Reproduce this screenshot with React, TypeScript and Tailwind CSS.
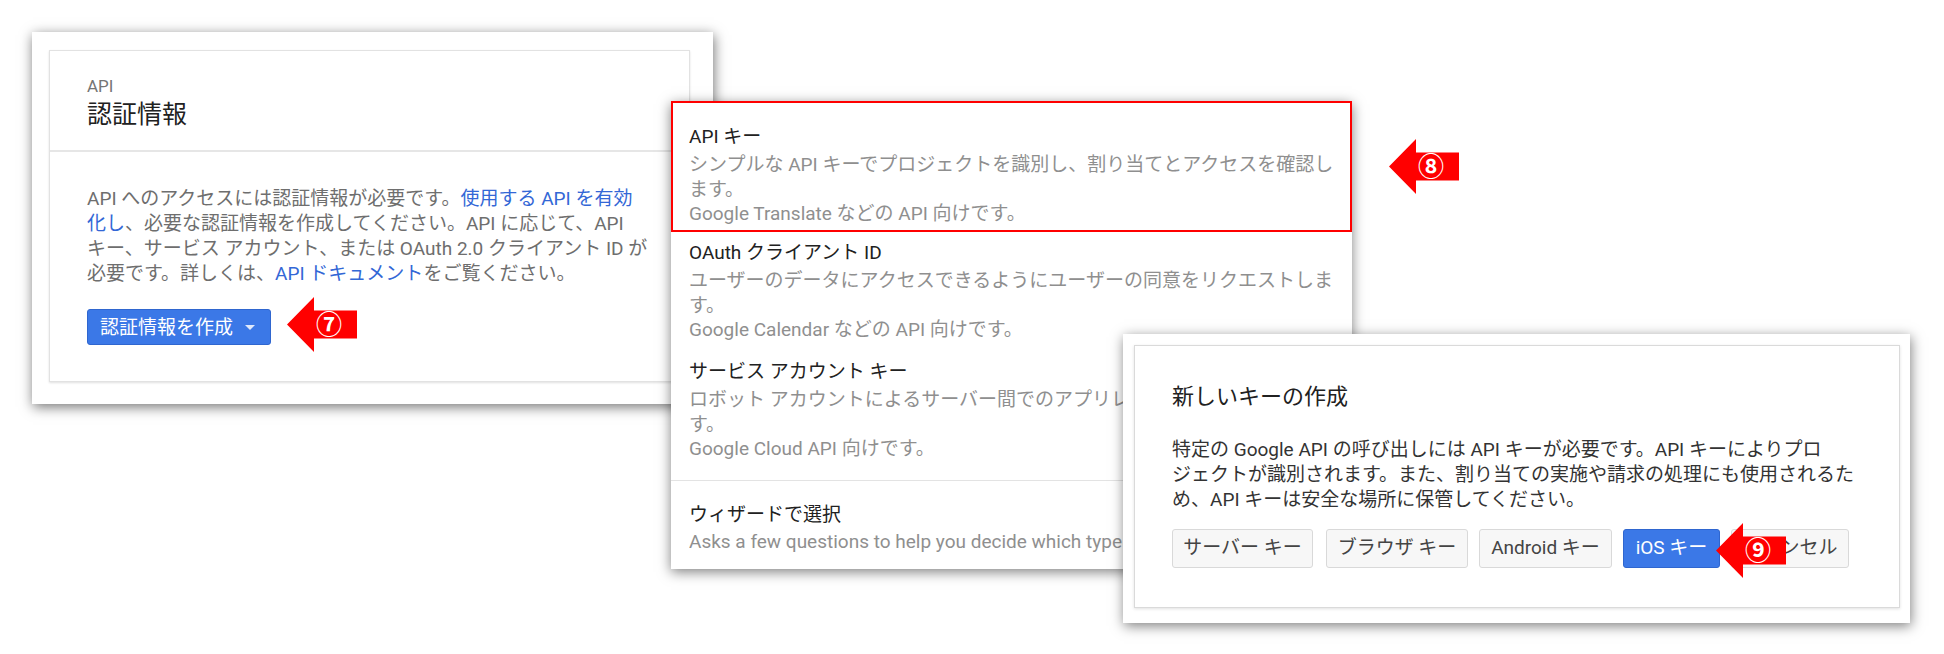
import React from "react";

const FONT = "font-['Roboto','Noto_Sans_CJK_JP',sans-serif]";

function Arrow({ n, className }: { n: string; className: string }) {
  return (
    <div className={`absolute w-[70px] h-[55px] ${className}`}>
      <svg width="70" height="55" viewBox="0 0 70 55" className="absolute left-0 top-0">
        <polygon points="0,27.5 27,0 27,13.5 70,13.5 70,41.5 27,41.5 27,55" fill="#ff0000" />
      </svg>
      <span className="absolute left-[28px] top-[12px] w-[28px] h-[31px] flex items-center justify-center text-white text-[26px] leading-none font-bold">
        {n}
      </span>
    </div>
  );
}

type MenuItem = { title: string; lines: string[] };

const items: MenuItem[] = [
  {
    title: "API キー",
    lines: [
      "シンプルな API キーでプロジェクトを識別し、割り当てとアクセスを確認し",
      "ます。",
      "Google Translate などの API 向けです。",
    ],
  },
  {
    title: "OAuth クライアント ID",
    lines: [
      "ユーザーのデータにアクセスできるようにユーザーの同意をリクエストしま",
      "す。",
      "Google Calendar などの API 向けです。",
    ],
  },
  {
    title: "サービス アカウント キー",
    lines: [
      "ロボット アカウントによるサーバー間でのアプリレベルの認証を有効にしま",
      "す。",
      "Google Cloud API 向けです。",
    ],
  },
];

function ItemBody({ item, clip }: { item: MenuItem; clip?: boolean }) {
  return (
    <>
      <div className="text-[19px] leading-[28px] text-[#212121] whitespace-nowrap">{item.title}</div>
      <div className={`mt-[2px] text-[19px] leading-[24.5px] text-[#8f8f8f] ${clip ? "w-[434px] overflow-hidden" : ""}`}>
        {item.lines.map((l, i) => (
          <div key={i} className="whitespace-nowrap">
            {l}
          </div>
        ))}
      </div>
    </>
  );
}

export default function App() {
  return (
    <div className={`relative w-[1944px] h-[654px] bg-white overflow-hidden ${FONT}`}>
      {/* Panel 1: credentials card */}
      <div className="absolute left-[32px] top-[32px] w-[681px] h-[372px] bg-white shadow-[1px_3px_12px_rgba(0,0,0,0.55)] pl-[17px] pt-[18px]">
        <div className="w-[641px] h-[332px] bg-white border border-[#e2e2e2] shadow-[0_1px_2px_rgba(0,0,0,0.12)]">
          <div className="h-[101px] border-b-2 border-[#e6e6e6] pl-[37px] pt-[25px]">
            <div className="text-[17px] leading-[20px] text-[#757575]">API</div>
            <div className="mt-[4px] text-[25px] leading-[30px] text-[#212121]">認証情報</div>
          </div>
          <div className="pl-[37px] pt-[34px]">
            <div className="text-[19px] leading-[25px] text-[#6e6e6e]">
              <div className="whitespace-nowrap">
                API へのアクセスには認証情報が必要です。<span className="text-[#3367d6]">使用する API を有効</span>
              </div>
              <div className="whitespace-nowrap">
                <span className="text-[#3367d6]">化し</span>、必要な認証情報を作成してください。API に応じて、API
              </div>
              <div className="whitespace-nowrap">キー、サービス アカウント、または OAuth 2.0 クライアント ID が</div>
              <div className="whitespace-nowrap">
                必要です。詳しくは、<span className="text-[#3367d6]">API ドキュメント</span>をご覧ください。
              </div>
            </div>
            <div className="mt-[23px] flex items-center w-[184px] h-[36px] pl-[12px] pr-[15px] bg-[#3b78e7] border border-[#2f66cf] rounded-[3px] text-white text-[19px] leading-none">
              <span className="whitespace-nowrap">認証情報を作成</span>
              <span className="ml-auto w-0 h-0 border-l-[5px] border-r-[5px] border-t-[5px] border-l-transparent border-r-transparent border-t-[#dfe9fb]" />
            </div>
          </div>
        </div>
      </div>

      {/* Panel 2: dropdown menu */}
      <div className="absolute left-[671px] top-[101px] w-[681px] h-[468px] bg-white shadow-[0_3px_12px_rgba(0,0,0,0.5)] flex flex-col">
        <div className="h-[131px] border-2 border-[#ff0000] pl-[16px] pt-[20px]">
          <ItemBody item={items[0]} />
        </div>
        <div className="pl-[18px] pt-[7px]">
          <ItemBody item={items[1]} />
        </div>
        <div className="pl-[18px] pt-[15.5px] pb-[18px] border-b border-[#e3e3e3]">
          <ItemBody item={items[2]} clip />
        </div>
        <div className="pl-[18px] pt-[20px]">
          <div className="text-[19px] leading-[28px] text-[#212121] whitespace-nowrap">ウィザードで選択</div>
          <div className="mt-[1px] w-[434px] overflow-hidden text-[19px] leading-[24px] text-[#8f8f8f] whitespace-nowrap">
            Asks a few questions to help you decide which type of credential to use
          </div>
        </div>
      </div>

      {/* Panel 3: dialog */}
      <div className="absolute left-[1123px] top-[334px] w-[787px] h-[289px] bg-white shadow-[1px_3px_12px_rgba(0,0,0,0.5)] pl-[11px] pt-[11px]">
        <div className="w-[766px] h-[263px] bg-white border border-[#dadada] shadow-[0_1px_3px_rgba(0,0,0,0.12)] pl-[37px] pt-[37px]">
          <div className="text-[22px] leading-[28px] text-[#212121] whitespace-nowrap">新しいキーの作成</div>
          <div className="mt-[25.5px] text-[19px] leading-[25px] text-[#333333]">
            <div className="whitespace-nowrap">特定の Google API の呼び出しには API キーが必要です。API キーによりプロ</div>
            <div className="whitespace-nowrap">ジェクトが識別されます。また、割り当ての実施や請求の処理にも使用されるた</div>
            <div className="whitespace-nowrap">め、API キーは安全な場所に保管してください。</div>
          </div>
          <div className="mt-[17.5px] flex gap-[11px]">
            <div className="h-[39px] w-[141px] mr-[2px] flex items-center justify-center bg-[#f7f7f7] border border-[#d9d9d9] rounded-[3px] text-[19px] text-[#444444] whitespace-nowrap">
              サーバー キー
            </div>
            <div className="h-[39px] w-[142px] flex items-center justify-center bg-[#f7f7f7] border border-[#d9d9d9] rounded-[3px] text-[19px] text-[#444444] whitespace-nowrap">
              ブラウザ キー
            </div>
            <div className="h-[39px] w-[133px] flex items-center justify-center bg-[#f7f7f7] border border-[#d9d9d9] rounded-[3px] text-[19px] text-[#444444] whitespace-nowrap">
              Android キー
            </div>
            <div className="h-[39px] w-[97px] flex items-center justify-center bg-[#3b78e7] border border-[#2f66cf] rounded-[3px] text-[19px] text-white whitespace-nowrap">
              iOS キー
            </div>
            <div className="h-[39px] w-[118px] flex items-center justify-center bg-[#f7f7f7] border border-[#d9d9d9] rounded-[3px] text-[19px] text-[#444444] whitespace-nowrap">
              キャンセル
            </div>
          </div>
        </div>
      </div>

      <Arrow n="⑦" className="left-[287px] top-[297px]" />
      <Arrow n="⑧" className="left-[1389px] top-[139px]" />
      <Arrow n="⑨" className="left-[1716px] top-[523px]" />
    </div>
  );
}
